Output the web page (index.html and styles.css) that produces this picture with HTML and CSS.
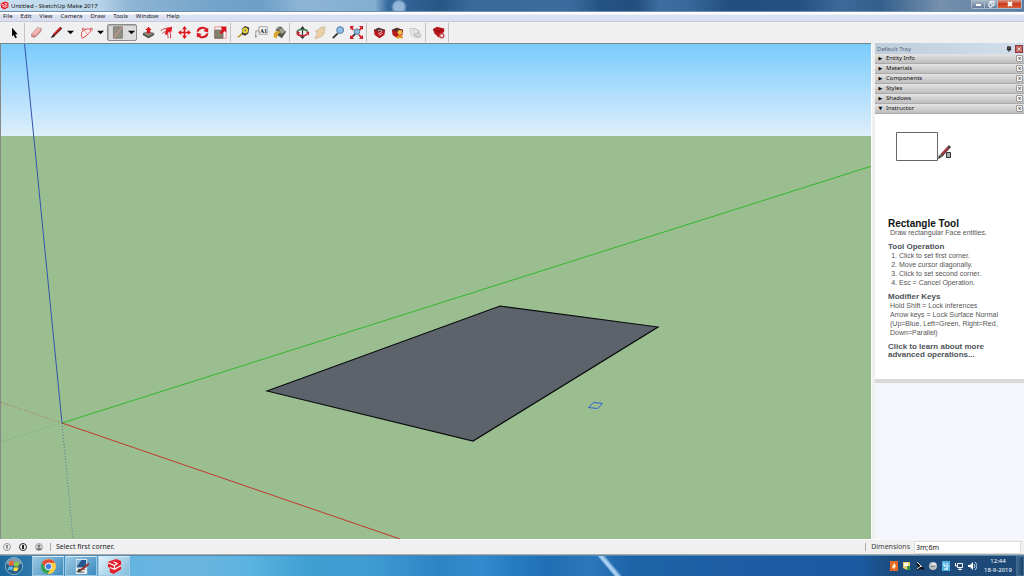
FILE: index.html
```html
<!DOCTYPE html>
<html lang="en">
<head>
<meta charset="utf-8">
<title>Untitled - SketchUp Make 2017</title>
<link rel="stylesheet" href="styles.css">
</head>
<body>
<div class="app">
  <header class="titlebar">
    <svg class="logo" viewBox="0 0 16 16"><path fill="#e5202a" d="M1 4l8-3 6 2v8l-7 4-6-3z"/><path fill="none" stroke="#fff" stroke-width="1.4" d="M2 5l6 3 5-2M4 9l5 2 4-2M8 4l4 1"/></svg>
    <h1 class="title">Untitled - SketchUp Make 2017</h1>
    <div class="window-controls">
      <button class="win-btn" aria-label="Minimize"><svg viewBox="0 0 12 9"><path d="M4 4h5v2H4z" fill="#fff"/></svg></button>
      <button class="win-btn" aria-label="Restore"><svg viewBox="0 0 12 9"><path d="M5 2.500V1.500h4v4H8M4 3h3v4H4z" fill="none" stroke="#fff"/></svg></button>
      <button class="win-btn win-close" aria-label="Close"><svg viewBox="0 0 12 9"><path d="M4 2l4 4M8 2L4 6" stroke="#fff" stroke-width="2"/></svg></button>
    </div>
  </header>
  <nav class="menubar">
    <button>File</button><button>Edit</button><button>View</button><button>Camera</button><button>Draw</button><button>Tools</button><button>Window</button><button>Help</button>
  </nav>
  <div class="toolbar" role="toolbar" aria-label="Getting Started">
    <div class="group">
      <button class="tool" aria-label="Select"><svg viewBox="0 0 16 16"><path d="M5 2v11l2-2 2 4 2-1-2-4h3z"/></svg></button>
    </div>
    <div class="group">
      <button class="tool" aria-label="Eraser"><svg viewBox="0 0 16 16"><path d="M2 10l7-8 5 1-1 4-7 7-4-1z" fill="#df8f8f" stroke="#9b6a6a" stroke-width=".8"/><path d="M2 10l7-8 5 1-7 8z" fill="#f3b9b7"/></svg></button>
      <span class="split">
        <button class="tool" aria-label="Line"><svg viewBox="0 0 16 16"><path d="M4 12L14 2" stroke="#5b1818" stroke-width="3"/><path d="M5 10l8-8" stroke="#d92226" stroke-width="1.800"/><path d="M1 15l2-4 3 2z" fill="#222"/></svg></button>
        <button class="drop" aria-label="Line tools"><svg viewBox="0 0 8 8"><path d="M0 2h8L4 6z"/></svg></button>
      </span>
      <span class="split">
        <button class="tool" aria-label="Arc"><svg viewBox="0 0 16 16"><path d="M3 15C-1 8 4 2 14 4Q13 9 3 15" fill="#fbefef" stroke="#df4950" stroke-width="1.200"/><path d="M4 4l5 6" stroke="#e17b80"/><g fill="#fff" stroke="#c33"><circle cx="14" cy="4" r="1.300"/><circle cx="4" cy="4" r="1.300"/></g></svg></button>
        <button class="drop" aria-label="Arc tools"><svg viewBox="0 0 8 8"><path d="M0 2h8L4 6z"/></svg></button>
      </span>
      <span class="split active">
        <button class="tool" aria-label="Rectangle" aria-pressed="true"><svg viewBox="0 0 16 16"><path d="M3 1h11v14H3z" fill="#929083" stroke="#77756b"/><path d="M3 15L14 1" stroke="#f29a95"/></svg></button>
        <button class="drop" aria-label="Rectangle tools"><svg viewBox="0 0 8 8"><path d="M0 2h8L4 6z"/></svg></button>
      </span>
    </div>
    <div class="group">
      <button class="tool" aria-label="Push/Pull"><svg viewBox="0 0 16 16"><path d="M1 9l7-3 7 3v2l-7 4-7-4z" fill="#4c4b42"/><path d="M1 9l7-3 7 3-7 4z" fill="#89877a"/><path d="M6 9V5H4l4-4 4 4h-2v4z" fill="#d91920"/></svg></button>
      <button class="tool" aria-label="Offset"><svg viewBox="0 0 16 16"><path d="M1 6c6-6 13-2 12 9M3 9c4-4 7-1 7 6" fill="none" stroke="#bc3a3d" stroke-width="1.200"/><path d="M6 10l2-8 7-1-1 7-2-2-4 5z" fill="#e31d25"/></svg></button>
      <button class="tool" aria-label="Move"><svg viewBox="0 0 16 16"><path d="M8 0l3 4H9v3h3V5l4 3-4 3V9H9v3h2l-3 4-3-4h2V9H4v2L0 8l4-3v2h3V4H5z" fill="#dc171d"/></svg></button>
      <button class="tool" aria-label="Rotate"><svg viewBox="0 0 16 16"><path d="M2 7c1-6 9-6 11-2M14 9c-1 6-9 6-11 2" fill="none" stroke="#d51d22" stroke-width="2.600"/><path d="M15 2v6L9 6zM1 14V8l6 2z" fill="#d51d22"/></svg></button>
      <button class="tool" aria-label="Scale"><svg viewBox="0 0 16 16"><path d="M1 1h14v14H1z" fill="#f6eded" stroke="#e58585"/><path d="M1 5h10v10H1z" fill="#85836f" stroke="#666459"/><path d="M7 8l3-4-2-3h7v7l-2-2-4 4z" fill="#d9151d"/></svg></button>
    </div>
    <div class="group">
      <button class="tool" aria-label="Tape Measure"><svg viewBox="0 0 16 16"><path d="M1 14l6-5" stroke="#b59c29" stroke-width="2"/><path d="M6 3l4-3 5 2-1 7-4 3-4-2z" fill="#333"/><circle cx="10" cy="5.500" r="3.600" fill="#e8d636"/><circle cx="10" cy="5.500" r="1.300" fill="#777"/></svg></button>
      <button class="tool" aria-label="Text"><svg viewBox="0 0 16 16"><path d="M5 1h10v9H5z" fill="#fff" stroke="#888"/><path d="M5 6H1v8M0 11l1 3 2-2" fill="none" stroke="#888"/><text x="6" y="8" class="icon-text">A1</text></svg></button>
      <button class="tool" aria-label="Paint Bucket"><svg viewBox="0 0 16 16"><path d="M5 4l5-3 6 6-5 8-6-4z" fill="#55544c"/><path d="M7 4l4-2 4 4-4 4z" fill="#a3a195"/><path d="M1 14c-1-7 4-10 9-6-4 1-5 3-5 7z" fill="#dba62b"/><path d="M4 6c0-5 5-6 7-3" fill="none" stroke="#333"/></svg></button>
    </div>
    <div class="group">
      <button class="tool" aria-label="Orbit"><svg viewBox="0 0 16 16"><path d="M8 3v10" stroke="#333" stroke-width="1.500"/><path d="M2 9c-3-6 12-6 12-2" fill="none" stroke="#3d8759" stroke-width="2.200"/><path d="M2 9c1 4 8 4 12 1" fill="none" stroke="#c32229" stroke-width="2.200"/><path d="M12 7h4v5zM1 6l4 2-4 4z" fill="#c32229"/><path d="M5 4l3-4 3 4zM5 13l3 3 3-3z" fill="#333"/></svg></button>
      <button class="tool" aria-label="Pan"><svg viewBox="0 0 16 16"><path d="M1 15l3-5-2-4 3-1 3-3 6-1-3 3 3 1-2 2 1 2-4 4-4 1-2 2z" fill="#ecd0a6" stroke="#baa17e" stroke-width=".7"/></svg></button>
      <button class="tool" aria-label="Zoom"><svg viewBox="0 0 16 16"><path d="M1 15l6-6" stroke="#333" stroke-width="2.200"/><circle cx="10" cy="5" r="4.200" fill="#8fc0ea" stroke="#4c7499" stroke-width="1.200"/></svg></button>
      <button class="tool" aria-label="Zoom Extents"><svg viewBox="0 0 16 16"><path d="M2 14l5-5" stroke="#333" stroke-width="2"/><circle cx="8.500" cy="7" r="3.500" fill="#8fb8dd" stroke="#466783"/><path d="M1 1l3 4M15 1l-3 4M1 15l3-3M15 15l-4-4" stroke="#d21a22" stroke-width="2"/><path d="M0 0h5L1 5zM16 0v5l-5-5zM0 16v-5l5 5zM16 16h-5l5-5z" fill="#d21a22"/></svg></button>
    </div>
    <div class="group">
      <button class="tool" aria-label="3D Warehouse"><svg viewBox="0 0 16 16"><path d="M1 5l6-3 8 3-1 6-6 4-6-4z" fill="#b8191f"/><path d="M1 5l6-3 8 3-6 2z" fill="#4b3431"/><path d="M6 6l4-1 1 2-4 2 1 2 4-2" fill="none" stroke="#f0d4d4"/></svg></button>
      <button class="tool" aria-label="Share Model"><svg viewBox="0 0 16 16"><path d="M1 5l6-3 8 3-1 6-6 4-6-4z" fill="#b71b20"/><path d="M1 5l6-3 8 3-6 2z" fill="#4b3431"/><circle cx="11" cy="8" r="3" fill="#f0bd41"/><path d="M6 15c1-5 9-5 9 0z" fill="#e69a20"/></svg></button>
      <button class="tool" aria-label="Send to LayOut" disabled><svg viewBox="0 0 16 16"><path d="M1 3h7l3 3v6H3zM5 5h7l2 9H7z" fill="#eee" stroke="#c0c0c0"/><path d="M7 9h4V7l4 4-4 3v-2H8z" fill="#ddd" stroke="#b5b5b5"/></svg></button>
    </div>
    <div class="group">
      <button class="tool" aria-label="Extension Warehouse"><svg viewBox="0 0 16 16"><path d="M1 4l5-3 9 2v4l-7 7-5-5z" fill="#bb151b"/><path d="M2 4l5 3 7-3" fill="none" stroke="#761014"/><circle cx="12" cy="12" r="2.500" fill="#eee" stroke="#cb3b42" stroke-width="1.600"/></svg></button>
    </div>
  </div>
  <div class="workspace">
    <main class="viewport">
      <svg class="scene" viewBox="1 44 870 495" preserveAspectRatio="none" role="img" aria-label="3D model view">
        <defs><linearGradient id="sky" x2="0" y2="1"><stop stop-color="#79cbfd"/><stop offset="1" stop-color="#deeffb"/></linearGradient></defs>
        <path fill="#9bbe91" d="M0 43h872v496H0z"/>
        <path fill="url(#sky)" d="M0 43h872v93H0z"/>
        <g fill="none">
          <path stroke="#31b72f" d="M62 423L872 166"/>
          <path stroke="#c1382d" d="M62 423L400 539"/>
          <path stroke="#3454ad" d="M24.500 43L62 423"/>
          <path stroke="#bb6554" stroke-dasharray="1 2" d="M62 423L0 402"/>
          <path stroke="#63b568" stroke-dasharray="1 2" d="M62 423L0 442"/>
          <path stroke="#527191" stroke-dasharray="1 2" d="M62 423L73 539"/>
          <path stroke="#3560ce" d="M588.500 407.500l5-5 9 1-5 5z"/>
        </g>
        <path fill="#5c636a" stroke="#090b0c" stroke-width="1.200" d="M267 391L500 306l158 21-185 114z"/>
      </svg>
    </main>
    <aside class="tray">
      <div class="tray-head"><h2>Default Tray</h2>
        <button aria-label="Pin"><svg viewBox="0 0 8 8"><path d="M2 1h4v4H2zM1 5h6M4 5v3" stroke="#111" fill="#555"/></svg></button>
        <button class="tray-close" aria-label="Close tray"><svg viewBox="0 0 8 8"><path d="M2 2l4 4M6 2L2 6" stroke="#fff"/></svg></button>
      </div>
      <div class="section"><button class="toggle"><span>▶</span>Entity Info</button><button class="close" aria-label="Close Entity Info">×</button></div>
      <div class="section"><button class="toggle"><span>▶</span>Materials</button><button class="close" aria-label="Close Materials">×</button></div>
      <div class="section"><button class="toggle"><span>▶</span>Components</button><button class="close" aria-label="Close Components">×</button></div>
      <div class="section"><button class="toggle"><span>▶</span>Styles</button><button class="close" aria-label="Close Styles">×</button></div>
      <div class="section"><button class="toggle"><span>▶</span>Shadows</button><button class="close" aria-label="Close Shadows">×</button></div>
      <div class="section"><button class="toggle" aria-expanded="true"><span>▼</span>Instructor</button><button class="close" aria-label="Close Instructor">×</button></div>
      <article class="instructor">
        <svg class="demo" viewBox="0 0 60 32"><path d="M.5.500h41v28H.5z" fill="#fff" stroke="#666"/><path d="M45 24l9-10" stroke="#544" stroke-width="3"/><path d="M46 22l6-6" stroke="#b83838" stroke-width="2"/><path d="M42 27l1-4 3 2z" fill="#333"/><path d="M50.500 20.500h4v5h-4z" fill="#aaa" stroke="#333"/></svg>
        <h2>Rectangle Tool</h2>
        <p>Draw rectangular Face entities.</p>
        <h3>Tool Operation</h3>
        <ol><li>Click to set first corner.</li><li>Move cursor diagonally.</li><li>Click to set second corner.</li><li>Esc = Cancel Operation.</li></ol>
        <h3>Modifier Keys</h3>
        <p>Hold Shift = Lock inferences<br>Arrow keys = Lock Surface Normal<br>(Up=Blue, Left=Green, Right=Red,<br>Down=Parallel)</p>
        <a href="#">Click to learn about more<br>advanced operations...</a>
      </article>
    </aside>
  </div>
  <footer class="status">
    <button aria-label="Geo-location"><svg viewBox="0 0 10 10"><circle cx="5" cy="5" r="3.500" fill="#eee" stroke="#999"/><path d="M4 3h2v2L5 8 4 5z" fill="#888"/></svg></button>
    <button aria-label="Credits"><svg viewBox="0 0 10 10"><circle cx="5" cy="5" r="3.500" fill="#eee" stroke="#333"/><path d="M4 3h2v4H4z" fill="#222"/></svg></button>
    <button aria-label="Sign in"><svg viewBox="0 0 10 10"><circle cx="5" cy="5" r="3.500" fill="#ddd" stroke="#aaa"/><circle cx="5" cy="4" r="1.500" fill="#777"/><path d="M2 8c1-3 5-3 6 0z" fill="#777"/></svg></button>
    <span class="hint">Select first corner.</span>
    <label for="dims">Dimensions</label>
    <input id="dims" type="text" value="3m;6m">
  </footer>
  <div class="taskbar">
    <button class="start" aria-label="Start"><svg viewBox="0 0 22 22"><circle cx="11" cy="11" r="9.500" fill="#285e88" stroke="#7eb5d0"/><path d="M2 8c3-8 15-8 18 0-5 3-13 3-18 0z" fill="#7c9eb2"/><path d="M6 6c2-1 3-1 5 0l-1 5c-2-1-3-1-5 0z" fill="#ef633d"/><path d="M12 6c2 1 3 1 5 0l-1 5c-2 1-3 1-5 0z" fill="#8cca42"/><path d="M5 12c2-1 3-1 5 0l-1 4c-2-1-3-1-5 0z" fill="#52b9ee"/><path d="M11 12c2 1 3 1 5 0l-1 4c-2 1-3 1-5 0z" fill="#ffdc3f"/></svg></button>
    <button class="task" aria-label="Chrome"><svg viewBox="0 0 16 16"><circle cx="8" cy="8" r="8" fill="#ffcd42"/><path d="M1 4c3-5 11-5 14 0H8L5 10z" fill="#df4a3d"/><path d="M1 4l4 6 5 1-3 5C1 15-2 9 1 4z" fill="#34a35a"/><circle cx="8" cy="8" r="3.500" fill="#3f7de0" stroke="#fff"/></svg></button>
    <button class="task" aria-label="Editor"><svg viewBox="0 0 16 16"><path d="M2 0h12v16H2z" fill="#e9edf0"/><path d="M3 1h10v8H3z" fill="#25598f"/><path d="M3 1h5L3 8z" fill="#87bddf"/><path d="M4 11h8M4 14h7" stroke="#555"/><path d="M7 12l9-7" stroke="#9b3029" stroke-width="2"/><path d="M2 14l4-3 2 2z" fill="#222"/></svg></button>
    <button class="task current" aria-label="SketchUp"><svg viewBox="0 0 16 16"><path fill="#e5202a" d="M1 3l9-3 5 2v9l-8 5-4-2v-4L1 8z"/><path fill="none" stroke="#fff" stroke-width="1.200" d="M1 4l7 3 3-2-4-2M3 9l5 2 7-4M8 7v4"/></svg></button>
    <div class="systray">
      <svg viewBox="0 0 10 10"><path d="M1 0h8v10H1z" fill="#e66825"/><path d="M5 2l2 3-2 3-2-2z" fill="#fff1c7"/></svg>
      <svg viewBox="0 0 10 10"><path d="M1 1h7v6L5 9 1 7z" fill="#ead36c"/><path d="M2 2h4v3H2z" fill="#fff"/><path d="M5 5h3v4H5z" fill="#39964d"/></svg>
      <svg viewBox="0 0 10 10"><path d="M1 1l8 6v2L6 8 1 9l2-3z" fill="#111"/><path d="M2 1l5 5M2 8l4-3" stroke="#eee"/></svg>
      <svg viewBox="0 0 10 10"><circle cx="5" cy="5" r="4" fill="#bdc3c5"/><path d="M2 5h5v1H3z" fill="#747d83"/><path d="M4 3h4" stroke="#fff"/></svg>
      <svg viewBox="0 0 10 10"><path d="M1 0h8v10H1z" fill="#50b2e4"/><path d="M3 2v3h2M6 2v6M3 8h4M7 5h1" fill="none" stroke="#fff"/></svg>
      <svg viewBox="0 0 10 10"><path d="M3.500 2.500h5v4h-5zM1.500 2v3h2M4 8.500h4M6 7v2" fill="none" stroke="#fff"/></svg>
      <svg viewBox="0 0 10 10"><path d="M1 4h2l3-3v8L3 6H1z" fill="#fff"/><path d="M7 3q2 2 0 4M8 1q4 4 0 8" fill="none" stroke="#c5d5e5"/></svg>
    </div>
    <div class="clock"><time>12:44</time><time>18-9-2019</time></div>
    <button class="desktop" aria-label="Show desktop"></button>
  </div>
</div>
</body>
</html>
```
FILE: styles.css
```css
* { box-sizing: border-box; }
body { margin: 0; font: 7px/9px "Noto Sans", "Open Sans", sans-serif; color: #222; }
button { display: flex; align-items: center; justify-content: center; border: 0; padding: 0; margin: 0; background: none; color: inherit; font: inherit; }
svg { display: block; }
h1, h2, h3, p, ol { margin: 0; padding: 0; font-weight: 400; }
.app { display: flex; flex-direction: column; height: 100vh; background: #f0f0f0; }

.titlebar { flex: 0 0 12px; display: flex; align-items: center; gap: 2px; border-bottom: 1px solid #7090ad;
  background: radial-gradient(circle at 399px 7px, #92b6d6 0 5px, transparent 8px), linear-gradient(90deg, #c9e0f0 0, #b7d3e8 100px, #8eb5d4 130px, #72a3ca 220px, #6d9fc9 260px, #8db5d6 300px, #82aed1 375px, #376b9f 388px, #275684 440px, #376999 470px, #3b6c9d 570px, #245484 600px, #224d7c 635px, #3c6e9f 660px, #376899 690px, #214e7e 730px, #235181 800px, #3c6998 840px, #335f8d 880px, #7690ac 940px, #587da3 100%); }
.logo { width: 9px; height: 9px; }
.title { font-size: 6px; line-height: 10px; flex: 1; color: #111; }
.window-controls { align-self: flex-start; display: flex; height: 9px; border: 1px solid #a9b7c7; border-top: 0; border-radius: 0 0 2px 2px; margin-right: 2px; }
.win-btn { width: 13px; background: linear-gradient(#aebdcc, #647d99); border-right: 1px solid #a9b7c7; }
.win-btn svg { width: 12px; height: 9px; }
.win-close { width: 23px; background: linear-gradient(#d99a88, #c93b1e 50%, #d7613d); border: 0; }

.menubar { flex: 0 0 10px; display: flex; gap: 8px; padding-left: 3px; background: linear-gradient(#fff 0 2px, #dde2f2 3px, #d8ddef); border-bottom: 1px solid #c6cbd9; }
.menubar button { font-size: 6px; line-height: 9px; }

.toolbar { flex: 0 0 21px; display: flex; align-items: center; padding-left: 2px; background: #f0f0f0; }
.group { display: flex; align-items: center; padding: 0 1px 0 3px; border-right: 1px solid #c2c2c2; height: 19px; }
.group:nth-child(2) { gap: 2px; padding: 0 0 0 2px; border-right: 0; }
.group:nth-child(3) { padding-left: 2px; }
.tool { width: 18px; height: 17px; }
.tool svg { width: 13px; height: 13px; }
.drop { width: 10px; height: 17px; }
.drop svg { width: 7px; height: 7px; }
.split { display: flex; }
.active { border: 1px solid #8c8c8c; border-radius: 2px; background: #dcdcdc; box-shadow: inset 1px 1px 1px #b0b0b0; }
.active .tool, .active .drop { height: 15px; }
.icon-text { font: 700 7px "Liberation Serif", serif; }

.workspace { flex: 1; min-height: 0; display: flex; }
.viewport { flex: 1; min-width: 0; border-top: 1px solid #77858c; border-left: 1px solid #888; }
.scene { width: 100%; height: 100%; }
.tray { flex: 0 0 153px; padding-left: 3px; border-left: 1px solid #fff; background: linear-gradient(90deg, #f0f0f0 3px, #f3f6fb 3px); }
.tray-head { display: flex; align-items: center; gap: 2px; height: 11px; padding: 0 1px 0 2px; background: linear-gradient(90deg, #bfcddc, #d2dfeb); color: #56677a; }
.tray-head h2 { flex: 1; font-size: 6px; line-height: 10px; }
.tray-head button { width: 8px; height: 8px; }
.tray-head svg { width: 6px; height: 6px; }
.tray-close { background: #c56561; border: 1px solid #8d3c3c; }
.section { display: flex; align-items: center; height: 10px; padding: 0 1px 0 3px; background: linear-gradient(#e4e4e4, #bebebe); border-bottom: 1px solid #aaa; }
.toggle { flex: 1; justify-content: flex-start; font-size: 6px; line-height: 9px; gap: 3px; color: #111; }
.toggle span { width: 5px; font: 5px/9px "DejaVu Sans", sans-serif; }
.close { width: 7px; height: 7px; border: 1px solid #999; border-radius: 1px; background: #f5f5f5; font: 700 5px/5px "DejaVu Sans", sans-serif; color: #444; }
.instructor { padding: 18px 0 20px 13px; background: #fff; border-bottom: 4px solid #d9d9d9; font: 7px/9px "Liberation Sans", sans-serif; color: #555; }
.demo { width: 60px; height: 32px; margin: 0 0 55px 8px; }
.instructor h2 { font-size: 10px; line-height: 9px; font-weight: 700; color: #111; }
.instructor h3 { font-size: 8px; font-weight: 700; color: #4d5359; margin-top: 6px; line-height: 8px; }
.instructor p { padding-left: 2px; }
.instructor ol { padding-left: 11px; }
.instructor a { display: block; margin-top: 6px; font-size: 8px; line-height: 8px; font-weight: 700; color: #4d5359; text-decoration: none; }

.status { flex: 0 0 16px; display: flex; align-items: center; padding-left: 2px; gap: 6px; background: #f0f0f0; border-top: 1px solid #fafafa; border-bottom: 1px solid #aaa; }
.status svg { width: 10px; height: 10px; }
.hint { flex: 1; line-height: 8px; padding-left: 5px; border-left: 1px solid #aaa; }
.status label { border-left: 1px solid #aaa; padding-left: 5px; line-height: 8px; color: #444; }
.status input { width: 107px; height: 13px; margin: 0 3px 0 -2px; padding: 0 1px; border: 1px solid #ddd; background: #fff; font: inherit; color: #222; }

.taskbar { flex: 0 0 21px; display: flex; align-items: stretch; gap: 1px; border-top: 1px solid #528bb2;
  background: linear-gradient(50deg, transparent 0 470px, #a9d0f2 472px 474px, transparent 477px), linear-gradient(90deg, #1c679c 0, #2b78a9 30px, #65b4e0 130px, #6ab5df 200px, #5bb3df 250px, #3f9ed2 310px, #409bd3 370px, #2e83c4 440px, #348bcd 480px, #277dc1 510px, #206eb3 550px, #2c76ba 590px, #1d65a8 630px, #1d5da3 730px, #195aa0 860px, #1c4c7d 890px, #1d4875 100%); }
.start { width: 28px; margin-right: 3px; }
.start svg { width: 20px; height: 20px; }
.task { width: 32px; border: 1px solid #a0cae3; border-top-color: #d4ecf8; background: linear-gradient(135deg, #9dc8e3, #398bbf); }
.task svg { width: 15px; height: 15px; }
.current { background: linear-gradient(135deg, #e1f0f9, #80bddd); }
.systray { margin-left: auto; display: flex; align-items: center; gap: 3px; }
.systray svg { width: 10px; height: 10px; }
.clock { display: flex; flex-direction: column; justify-content: center; width: 34px; margin-left: 3px; text-align: center; font-size: 6px; line-height: 9px; color: #fff; }
.desktop { width: 8px; border: 1px solid #416b91; background: linear-gradient(90deg, #406b93, #183f68); }
```
